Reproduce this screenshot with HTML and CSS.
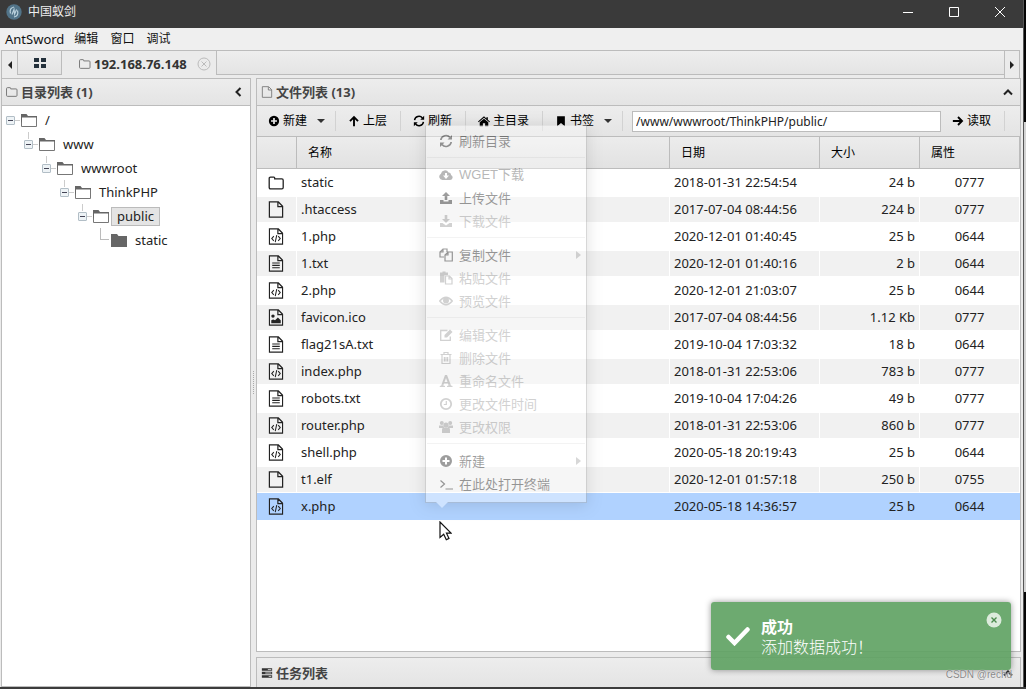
FILE: index.html
```html
<!DOCTYPE html>
<html lang="zh-CN">
<head>
<meta charset="utf-8">
<title>中国蚁剑</title>
<link rel="stylesheet" href="styles.css">
</head>
<body>
<svg class="sprite" aria-hidden="true">
  <symbol id="folder" viewBox="0 0 16 14"><path d="M.7 11.5v-9Q.7 1.2 2 1.2h3.4q.8 0 .8.9v.8h7.2q1.3 0 1.3 1.3v7.3q0 1.3-1.3 1.3H2Q.7 12.800.7 11.5z" fill="none" stroke="currentColor" stroke-width="1.3"/></symbol>
  <symbol id="page" viewBox="0 0 16 18"><path d="M1 1h9.500l4.500 4.500V17H1zM10 1.500V6h5" fill="none" stroke="currentColor" stroke-width="1.300"/></symbol>
  <symbol id="code" viewBox="0 0 16 18"><use href="#page"/><path d="M5.700 8.700 3.500 11.200l2.200 2.500M10.300 8.700l2.200 2.500-2.200 2.500M8.800 7.500 7.200 15" fill="none" stroke="currentColor" stroke-width="1.100"/></symbol>
  <symbol id="text" viewBox="0 0 16 18"><use href="#page"/><path d="M4 8.500h8M4 11h8M4 13.500h8" stroke="currentColor" stroke-width="1.200"/></symbol>
  <symbol id="image" viewBox="0 0 16 18"><use href="#page"/><path d="M3 15v-3l2-1 2 1 3-3 3 3v3z" fill="currentColor"/><circle cx="4.800" cy="7.500" r="1.800" fill="currentColor"/></symbol>
  <symbol id="tree-open" viewBox="0 0 16 13"><path d="M.5 12.500v-10h15v10z" fill="#fff" stroke="#777"/><path d="M0 0h5.500l1.500 2h9v1.500H1V7L0 9z" fill="#666"/></symbol>
  <symbol id="tree-full" viewBox="0 0 16 13"><path d="M0 0h6l1.500 2H16v11H0z" fill="#666"/></symbol>
  <symbol id="plus" viewBox="0 0 14 14"><path fill-rule="evenodd" fill="currentColor" d="M7 1a6 6 0 1 0 0 12A6 6 0 0 0 7 1zM6 3.500h2V6h2.500v2H8v2.500H6V8H3.500V6H6z"/></symbol>
  <symbol id="up" viewBox="0 0 14 14"><path d="M7 13V2.500M2.300 7.200 7 2.500l4.700 4.700" fill="none" stroke="currentColor" stroke-width="2.200"/></symbol>
  <symbol id="right" viewBox="0 0 14 14"><path d="M1 7h10.500M7 2.300 11.700 7 7 11.700" fill="none" stroke="currentColor" stroke-width="2.200"/></symbol>
  <symbol id="refresh" viewBox="0 0 14 14"><path d="M1.800 6A5.200 5.200 0 0 1 11 3.500M12.200 8A5.200 5.200 0 0 1 3 10.500" fill="none" stroke="currentColor" stroke-width="1.700"/><path d="M13 1v4.500H8.500zM1 13V8.500h4.500z" fill="currentColor"/></symbol>
  <symbol id="home" viewBox="0 0 14 14"><path d="M7 1.500 9.800 4V2.500h1.700v3L14 7.500l-.8.900L7 3.300.8 8.400 0 7.500zM7 4.300l5 4.200V13H8.300V9.500H5.700V13H2V8.500z" fill="currentColor"/></symbol>
  <symbol id="bookmark" viewBox="0 0 14 14"><path d="M2.500 1.500h9V13L7 9.200 2.500 13z" fill="currentColor"/></symbol>
  <symbol id="cloud" viewBox="0 0 14 14"><path fill-rule="evenodd" fill="currentColor" d="M3.500 12A3.300 3.300 0 0 1 2 5.800 4 4 0 0 1 9.500 4.500 2.500 2.500 0 0 1 12 7a2.600 2.600 0 0 1-1 5zM6 5v2.500H4L7 11l3-3.500H8V5z"/></symbol>
  <symbol id="upload" viewBox="0 0 14 14"><path d="M7 1 3 5h2.700v4h2.600V5H11zM1 9h3.500v1.500h5V9H13v4H1z" fill="currentColor"/></symbol>
  <symbol id="download" viewBox="0 0 14 14"><path d="M5.700 1v4H3l4 4 4-4H8.300V1zM1 9h2.500L7 11.500 10.500 9H13v4H1z" fill="currentColor"/></symbol>
  <symbol id="copy" viewBox="0 0 14 14"><path d="M5 9H1V4l3-3h4v3M4 1v3H1M6 13V7l3-3h4.300v9zM9 4v3H6" fill="none" stroke="currentColor" stroke-width="1.200"/></symbol>
  <symbol id="paste" viewBox="0 0 14 14"><path d="M1 1.500h2.500V.5h3v1H9V4H5.500v7.500H1z" fill="currentColor"/><path d="M6.500 5h4L13 7.500v5.500H6.500zM10 5v3h3" fill="none" stroke="currentColor" stroke-width="1.200"/></symbol>
  <symbol id="eye" viewBox="0 0 14 14"><path d="M.7 7Q7-.500 13.300 7 7 14.500.7 7z" fill="none" stroke="currentColor" stroke-width="1.300"/><circle cx="7" cy="6.500" r="3" fill="currentColor"/></symbol>
  <symbol id="edit" viewBox="0 0 14 14"><path d="M8.500 2.500H1.700v9.800h9.600V8.500" fill="none" stroke="currentColor" stroke-width="1.300"/><path d="m5.500 7 5.500-5.500L13.500 4 8 9.500H5.500z" fill="currentColor"/></symbol>
  <symbol id="trash" viewBox="0 0 14 14"><path d="M1.500 3.500h11M5 3V1.500h4V3M3 4v8.500h8V4M5.400 6v4.500M7 6v4.500M8.600 6v4.500" fill="none" stroke="currentColor" stroke-width="1.200"/></symbol>
  <symbol id="font" viewBox="0 0 14 14"><path fill-rule="evenodd" fill="currentColor" d="M6 1h2l4 10.500 1.500.5v1H8v-1l1.500-.5L9 9.500H5l-.7 2 1.700.5v1H.8v-1l1.400-.5zM5.500 8h3L7 4z"/></symbol>
  <symbol id="clock" viewBox="0 0 14 14"><circle cx="7" cy="7" r="5.200" fill="none" stroke="currentColor" stroke-width="1.800"/><path d="M7.300 4v3.500H4.800" fill="none" stroke="currentColor" stroke-width="1.200"/></symbol>
  <symbol id="users" viewBox="0 0 14 14"><g fill="currentColor"><circle cx="2.800" cy="3" r="2"/><circle cx="11.200" cy="3" r="2"/><circle cx="7" cy="5" r="2.600"/><path d="M0 5.500h4.500L5 8H0zM9.500 5.500H14V8H9zM3 13V9.500Q3 7.500 5 7.500h4q2 0 2 2V13z"/></g></symbol>
  <symbol id="terminal" viewBox="0 0 14 14"><path d="m1.500 3.500 4 3.500-4 3.500M6.500 12H14" fill="none" stroke="currentColor" stroke-width="1.200"/></symbol>
  <symbol id="tasks" viewBox="0 0 14 14"><path d="M1 1.500h12v3H1zM1 5.500h12v3H1zM1 9.500h12v3H1z" fill="currentColor"/><path d="M8 3h4M5 7h7M9 11h3" stroke="#ddd"/></symbol>
  <symbol id="chevron" viewBox="0 0 10 10"><path d="m1 7.500 4-4 4 4" fill="none" stroke="currentColor" stroke-width="2"/></symbol>
</svg>

<div class="desktop">
<div class="window">
  <header class="titlebar">
    <svg class="logo" viewBox="0 0 16 16"><circle cx="8" cy="8" r="7.700" fill="#527489"/><path d="M4.500 9.500Q3 4 8 3M11.500 6.500Q13 12 8 13M6 10.500 8 5.500l.6 4.500 2-4.500" fill="none" stroke="#b9d0dc" stroke-width="1.200"/></svg>
    <h1>中国蚁剑</h1>
    <div class="window-buttons">
      <button aria-label="最小化"><svg viewBox="0 0 12 12"><path d="M1 6.500h10"/></svg></button>
      <button aria-label="最大化"><svg viewBox="0 0 12 12"><path d="M1.500 1.500h9v9h-9z"/></svg></button>
      <button aria-label="关闭"><svg viewBox="0 0 12 12"><path d="m1 1 10 10M11 1 1 11"/></svg></button>
    </div>
  </header>
  <nav class="menubar"><button>AntSword</button><button>编辑</button><button>窗口</button><button>调试</button></nav>
  <div class="tabs">
    <button class="tab-arrow" aria-label="向左"><i class="tri left"></i></button>
    <button class="tab home" aria-label="主页"><i></i><i></i><i></i><i></i></button>
    <div class="tab current"><svg class="ic"><use href="#folder"/></svg><b>192.168.76.148</b><button class="tab-close" aria-label="关闭标签"><svg viewBox="0 0 14 14"><circle cx="7" cy="7" r="6"/><path d="m4.500 4.500 5 5M9.500 4.500l-5 5"/></svg></button></div>
    <div class="tab filler"></div>
    <button class="tab-arrow end" aria-label="向右"><i class="tri"></i></button>
  </div>
  <main class="panels">
    <section class="side">
      <div class="panel-head"><svg class="ic"><use href="#folder"/></svg><h2>目录列表 (1)</h2><button class="collapse" aria-label="折叠"><svg class="turn"><use href="#chevron"/></svg></button></div>
      <ul class="tree">
        <li><div class="node"><i class="toggle"></i><svg><use href="#tree-open"/></svg><span>/</span></div>
        <ul><li><div class="node joined"><i class="toggle"></i><svg><use href="#tree-open"/></svg><span>www</span></div>
        <ul><li><div class="node joined"><i class="toggle"></i><svg><use href="#tree-open"/></svg><span>wwwroot</span></div>
        <ul><li><div class="node joined"><i class="toggle"></i><svg><use href="#tree-open"/></svg><span>ThinkPHP</span></div>
        <ul><li><div class="node joined"><i class="toggle"></i><svg><use href="#tree-open"/></svg><span class="picked">public</span></div>
        <ul><li><div class="node"><i class="elbow"></i><svg><use href="#tree-full"/></svg><span>static</span></div></li></ul>
        </li></ul></li></ul></li></ul></li></ul></li>
      </ul>
    </section>
    <div class="splitter"></div>
    <div class="content">
      <section class="files">
        <div class="panel-head"><svg class="ic"><use href="#page"/></svg><h2>文件列表 (13)</h2><button class="collapse" aria-label="折叠"><svg><use href="#chevron"/></svg></button></div>
        <div class="toolbar">
          <button><svg><use href="#plus"/></svg>新建<i class="caret"></i></button>
          <button><svg><use href="#up"/></svg>上层</button>
          <button><svg><use href="#refresh"/></svg>刷新</button>
          <button><svg><use href="#home"/></svg>主目录</button>
          <button><svg><use href="#bookmark"/></svg>书签<i class="caret"></i></button>
          <input type="text" aria-label="路径" value="/www/wwwroot/ThinkPHP/public/">
          <button class="read"><svg><use href="#right"/></svg>读取</button>
        </div>
        <table>
          <colgroup><col class="c-icon"><col><col class="c-date"><col class="c-size"><col class="c-attr"></colgroup>
          <thead><tr><th></th><th>名称</th><th>日期</th><th>大小</th><th>属性</th></tr></thead>
          <tbody>
            <tr><td><svg class="dir"><use href="#folder"/></svg></td><td>static</td><td>2018-01-31 22:54:54</td><td>24 b</td><td>0777</td></tr>
            <tr><td><svg><use href="#page"/></svg></td><td>.htaccess</td><td>2017-07-04 08:44:56</td><td>224 b</td><td>0777</td></tr>
            <tr><td><svg><use href="#code"/></svg></td><td>1.php</td><td>2020-12-01 01:40:45</td><td>25 b</td><td>0644</td></tr>
            <tr><td><svg><use href="#text"/></svg></td><td>1.txt</td><td>2020-12-01 01:40:16</td><td>2 b</td><td>0644</td></tr>
            <tr><td><svg><use href="#code"/></svg></td><td>2.php</td><td>2020-12-01 21:03:07</td><td>25 b</td><td>0644</td></tr>
            <tr><td><svg><use href="#image"/></svg></td><td>favicon.ico</td><td>2017-07-04 08:44:56</td><td>1.12 Kb</td><td>0777</td></tr>
            <tr><td><svg><use href="#text"/></svg></td><td>flag21sA.txt</td><td>2019-10-04 17:03:32</td><td>18 b</td><td>0644</td></tr>
            <tr><td><svg><use href="#code"/></svg></td><td>index.php</td><td>2018-01-31 22:53:06</td><td>783 b</td><td>0777</td></tr>
            <tr><td><svg><use href="#text"/></svg></td><td>robots.txt</td><td>2019-10-04 17:04:26</td><td>49 b</td><td>0777</td></tr>
            <tr><td><svg><use href="#code"/></svg></td><td>router.php</td><td>2018-01-31 22:53:06</td><td>860 b</td><td>0777</td></tr>
            <tr><td><svg><use href="#code"/></svg></td><td>shell.php</td><td>2020-05-18 20:19:43</td><td>25 b</td><td>0644</td></tr>
            <tr><td><svg><use href="#page"/></svg></td><td>t1.elf</td><td>2020-12-01 01:57:18</td><td>250 b</td><td>0755</td></tr>
            <tr class="selected"><td><svg><use href="#code"/></svg></td><td>x.php</td><td>2020-05-18 14:36:57</td><td>25 b</td><td>0644</td></tr>
          </tbody>
        </table>
      </section>
      <section class="tasks"><div class="panel-head"><svg class="ic"><use href="#tasks"/></svg><h2>任务列表</h2><button class="collapse" aria-label="展开"><svg><use href="#chevron"/></svg></button></div></section>
    </div>
  </main>
</div>
<div class="edge"></div>
</div>

<div class="context-menu">
  <button><svg><use href="#refresh"/></svg>刷新目录</button>
  <hr>
  <button class="latin"><svg><use href="#cloud"/></svg>WGET下载</button>
  <button><svg><use href="#upload"/></svg>上传文件</button>
  <button disabled><svg><use href="#download"/></svg>下载文件</button>
  <hr>
  <button><svg><use href="#copy"/></svg>复制文件<i class="tri"></i></button>
  <button disabled><svg><use href="#paste"/></svg>粘贴文件</button>
  <button disabled><svg><use href="#eye"/></svg>预览文件</button>
  <hr>
  <button disabled><svg><use href="#edit"/></svg>编辑文件</button>
  <button disabled><svg><use href="#trash"/></svg>删除文件</button>
  <button disabled><svg><use href="#font"/></svg>重命名文件</button>
  <button disabled><svg><use href="#clock"/></svg>更改文件时间</button>
  <button disabled><svg><use href="#users"/></svg>更改权限</button>
  <hr>
  <button><svg><use href="#plus"/></svg>新建<i class="tri"></i></button>
  <button><svg><use href="#terminal"/></svg>在此处打开终端</button>
</div>
<svg class="cursor" viewBox="0 0 13 20"><path d="M1 1v15.500l3.700-3.300 2.600 5.500 2.700-1.300-2.500-5.200H12z" fill="#fff" stroke="#111" stroke-width="1.200"/></svg>

<div class="toast" role="status">
  <svg class="tick" viewBox="0 0 24 20"><path d="m2.500 11 6 6L21.500 3.500" fill="none" stroke="#fff" stroke-width="4.500" stroke-linecap="round"/></svg>
  <div class="message"><strong>成功</strong><p>添加数据成功！</p></div>
  <button aria-label="关闭通知"><svg viewBox="0 0 16 16"><circle cx="8" cy="8" r="7.500" fill="#dcebdc"/><path d="m5.500 5.500 5 5M10.500 5.500l-5 5" stroke="#4b8a4d" stroke-width="1.400"/></svg></button>
</div>
<div class="watermark">CSDN @rechd</div>
</body>
</html>
```

FILE: styles.css
```css
* { box-sizing: border-box; }
body {
  margin: 0;
  font: 13px/18px "Noto Sans", "Noto Sans CJK SC", sans-serif;
  color: #222;
  background: #3c3c3c;
  overflow: hidden;
}
button { margin: 0; padding: 0; border: 0; background: none; font: inherit; color: inherit; display: flex; align-items: center; }
h1, h2, p, ul { margin: 0; padding: 0; font-size: inherit; list-style: none; }
.sprite { display: none; }
svg { display: block; flex: none; }

.desktop { display: flex; height: 100vh; padding-bottom: 2px; }
.window { flex: 1; min-width: 0; display: flex; flex-direction: column; background: #ebebeb; }
.edge { flex: none; width: 3px; border-left: 1px solid #555; background: linear-gradient(#050505 122px, #d4d4d4 122px, #d4d4d4 592px, #050505 592px); }

.titlebar { flex: none; height: 28px; display: flex; align-items: center; gap: 6px; padding: 0 12px 4px 6px; background: #3a3a3a; color: #eee; }
.titlebar h1 { font-size: 12px; font-weight: 400; }
.logo { width: 16px; height: 16px; }
.window-buttons { margin-left: auto; display: flex; }
.window-buttons button { width: 46px; justify-content: center; }
.window-buttons button:last-child { width: 22px; margin-left: 12px; }
.window-buttons svg { width: 12px; height: 12px; fill: none; stroke: #fff; }

.menubar { flex: none; height: 22px; display: flex; gap: 12px; padding-left: 5px; background: #efefef; color: #111; }
.menubar button { font-size: 12px; }
.menubar button:first-child { font-size: 13px; margin-right: -2px; }

.tabs { flex: none; height: 28px; display: flex; margin: 0 3px 0 1px; border: 1px solid #bcbcbc; border-bottom: 0; }
.tab { height: 24px; border-bottom: 1px solid #bcbcbc; background: linear-gradient(#eee, #e4e4e4); }
.tab-arrow { width: 15px; justify-content: center; }
.tab-arrow.end { border-left: 1px solid #bcbcbc; }
.tab.home { width: 45px; border-left: 1px solid #bcbcbc; border-right: 1px solid #bcbcbc; display: grid; grid-template: 4px 4px / 5px 5px; gap: 2px; place-content: center; }
.home i { width: 5px; height: 4px; background: #23303b; }
.tab.current { height: 27px; border: 0; background: none; display: flex; align-items: center; width: 154px; padding: 0 5px 2px 17px; color: #333; }
.tab.current .ic { margin-right: 3px; }
.tab-close { margin-left: auto; }
.tab-close svg { width: 14px; height: 14px; fill: none; stroke: #bbb; }
.tab.filler { flex: 1; border-left: 1px solid #bcbcbc; }
.tri { border: 4px solid transparent; border-left: 4px solid #222; border-right: 0; }
.tri.left { border-right: 4px solid #222; border-left: 0; }

.panels { flex: 1; min-height: 0; display: flex; margin: 0 2px 0 1px; }
.side { flex: none; width: 250px; display: flex; flex-direction: column; border: 1px solid #bcbcbc; background: #fff; }
.panel-head { flex: none; height: 27px; display: flex; align-items: center; gap: 3px; padding: 0 7px 0 4px; background: linear-gradient(#ededed, #e4e4e4); border-bottom: 1px solid #bcbcbc; color: #444; }
.panel-head h2 { font-size: 13px; font-weight: 700; }
.ic { width: 12px; height: 12px; color: #777; }
.tasks .ic { color: #333; }
.collapse { margin-left: auto; color: #222; }
.collapse svg { width: 10px; height: 10px; }
.collapse .turn { transform: rotate(-90deg); }
.splitter { flex: none; width: 5px; background: repeating-linear-gradient(#aaa 0 1px, transparent 1px 2px) center / 1px 24px no-repeat; }
.content { flex: 1; min-width: 0; display: flex; flex-direction: column; gap: 5px; }
.files { flex: 1; border: 1px solid #bcbcbc; background: #fff; }
.tasks { flex: none; height: 30px; border: 1px solid #bcbcbc; border-bottom: 0; }
.tasks .panel-head { height: 29px; border: 0; }

.tree { padding: 2px 4px; color: #222; }
.tree ul { padding-left: 18px; }
.node { height: 24px; display: flex; align-items: center; position: relative; }
.node svg { width: 16px; height: 13px; margin-left: 6px; }
.node span { padding: 0 5px; margin-left: 2px; line-height: 17px; border: 1px solid transparent; }
.node .picked { background: #e4e4e4; border-color: #bbb; }
.toggle { width: 9px; height: 9px; border: 1px solid #b2bec6; border-radius: 1px; background: linear-gradient(#445, #445) center / 5px 1px no-repeat #eef3f6; }
.toggle::after { content: ""; position: absolute; left: 9px; top: 12px; width: 5px; border-top: 1px solid #ccc; }
.joined::before { content: ""; position: absolute; left: 4px; top: 0; height: 7px; border-left: 1px solid #ccc; }
.elbow { width: 9px; height: 12px; margin: 0 0 12px 4px; border-left: 1px solid #bbb; border-bottom: 1px solid #bbb; }
.elbow + svg { margin-left: 2px; }

.toolbar { height: 31px; display: flex; align-items: center; background: linear-gradient(#ededed, #e4e4e4); border-bottom: 1px solid #bcbcbc; color: #000; font-size: 12px; }
.toolbar button { height: 20px; padding: 0 13px 0 12px; border-right: 1px solid #d2d2d2; white-space: nowrap; }
.toolbar button:first-child { padding-left: 11px; }
.toolbar button svg { width: 12px; height: 12px; margin-right: 3px; }
.toolbar input { flex: 1; min-width: 0; height: 21px; margin: 0 0 0 9px; padding: 0 3px; border: 1px solid #bcbcbc; background: #fff; font: 12px "Noto Sans", sans-serif; color: #222; }
.toolbar .read { margin-right: 15px; padding: 0 13px 0 11px; }
.caret { margin-left: 10px; border: 4px solid transparent; border-top: 4px solid #333; border-bottom: 0; }
.toolbar button:has(.caret) { padding-right: 10px; }

table { width: 100%; table-layout: fixed; border-collapse: separate; border-spacing: 0; }
.c-icon { width: 40px; }
.c-date { width: 150px; }
.c-size, .c-attr { width: 100px; }
th { height: 32px; padding: 0 11px; text-align: left; font-size: 12px; font-weight: 400; color: #000; background: linear-gradient(#ececec, #e2e2e2); border-right: 1px solid #bcbcbc; border-bottom: 1px solid #bcbcbc; }
td { height: 27px; padding: 0 4px 2px; border: 1px solid #fff; border-width: 1px 1px 1px 0; white-space: nowrap; }
td:first-child { padding: 0 0 0 11px; }
tbody tr:nth-child(even) td { background: #f1f1f1; }
tbody .selected td { background: #b0d2ff; border-color: #b0d2ff; }
td:nth-child(4) { text-align: right; }
td:nth-child(5) { text-align: center; }
td svg { width: 16px; height: 17px; color: #222; }
td .dir { height: 14px; width: 17px; }

.context-menu { position: absolute; left: 425px; top: 125px; width: 162px; padding: 3px 1px 7px; background: #fff; border: 1px solid #999; border-top-color: #ddd; box-shadow: 0 2px 14px rgba(0, 0, 0, .3); opacity: .38; color: #000; font-size: 13px; }
.context-menu button { width: 100%; height: 23px; padding: 0 4px 0 12px; }
.context-menu button svg { width: 14px; height: 14px; margin-right: 6px; }
.context-menu button:disabled { color: #888; }
.context-menu .latin { font-family: "Liberation Sans", "Noto Sans CJK SC", sans-serif; color: #444; }
.context-menu hr { margin: 5px 0; border: 0; border-top: 1px solid #e2e2e2; }
.context-menu .tri { margin-left: auto; border-left-width: 5px; border-left-color: #999; }
.context-menu::after { content: ""; position: absolute; left: 10px; top: 100%; border: 6px solid transparent; border-top-color: #fff; border-bottom: 0; }
.cursor { position: absolute; left: 439px; top: 521px; width: 13px; height: 20px; }

.toast { position: absolute; right: 15px; bottom: 19px; width: 300px; height: 68px; display: flex; gap: 11px; padding: 14px 9px 0 15px; border-radius: 3px; background: rgba(93, 161, 96, .9); box-shadow: 0 0 6px rgba(0, 0, 0, .4); color: #fff; font: 16px/20px "Noto Sans CJK SC", sans-serif; }
.toast .tick { width: 24px; height: 20px; margin-top: 10px; }
.message { display: flex; flex-direction: column; }
.toast p { font-weight: 300; white-space: nowrap; }
.toast button { margin-left: auto; align-items: flex-start; margin-top: -4px; }
.toast button svg { width: 16px; height: 16px; }
.watermark { position: absolute; right: 14px; bottom: 5px; font: 10px/18px "Liberation Sans", sans-serif; color: #888; text-shadow: 0 0 1px #fff; }
```
